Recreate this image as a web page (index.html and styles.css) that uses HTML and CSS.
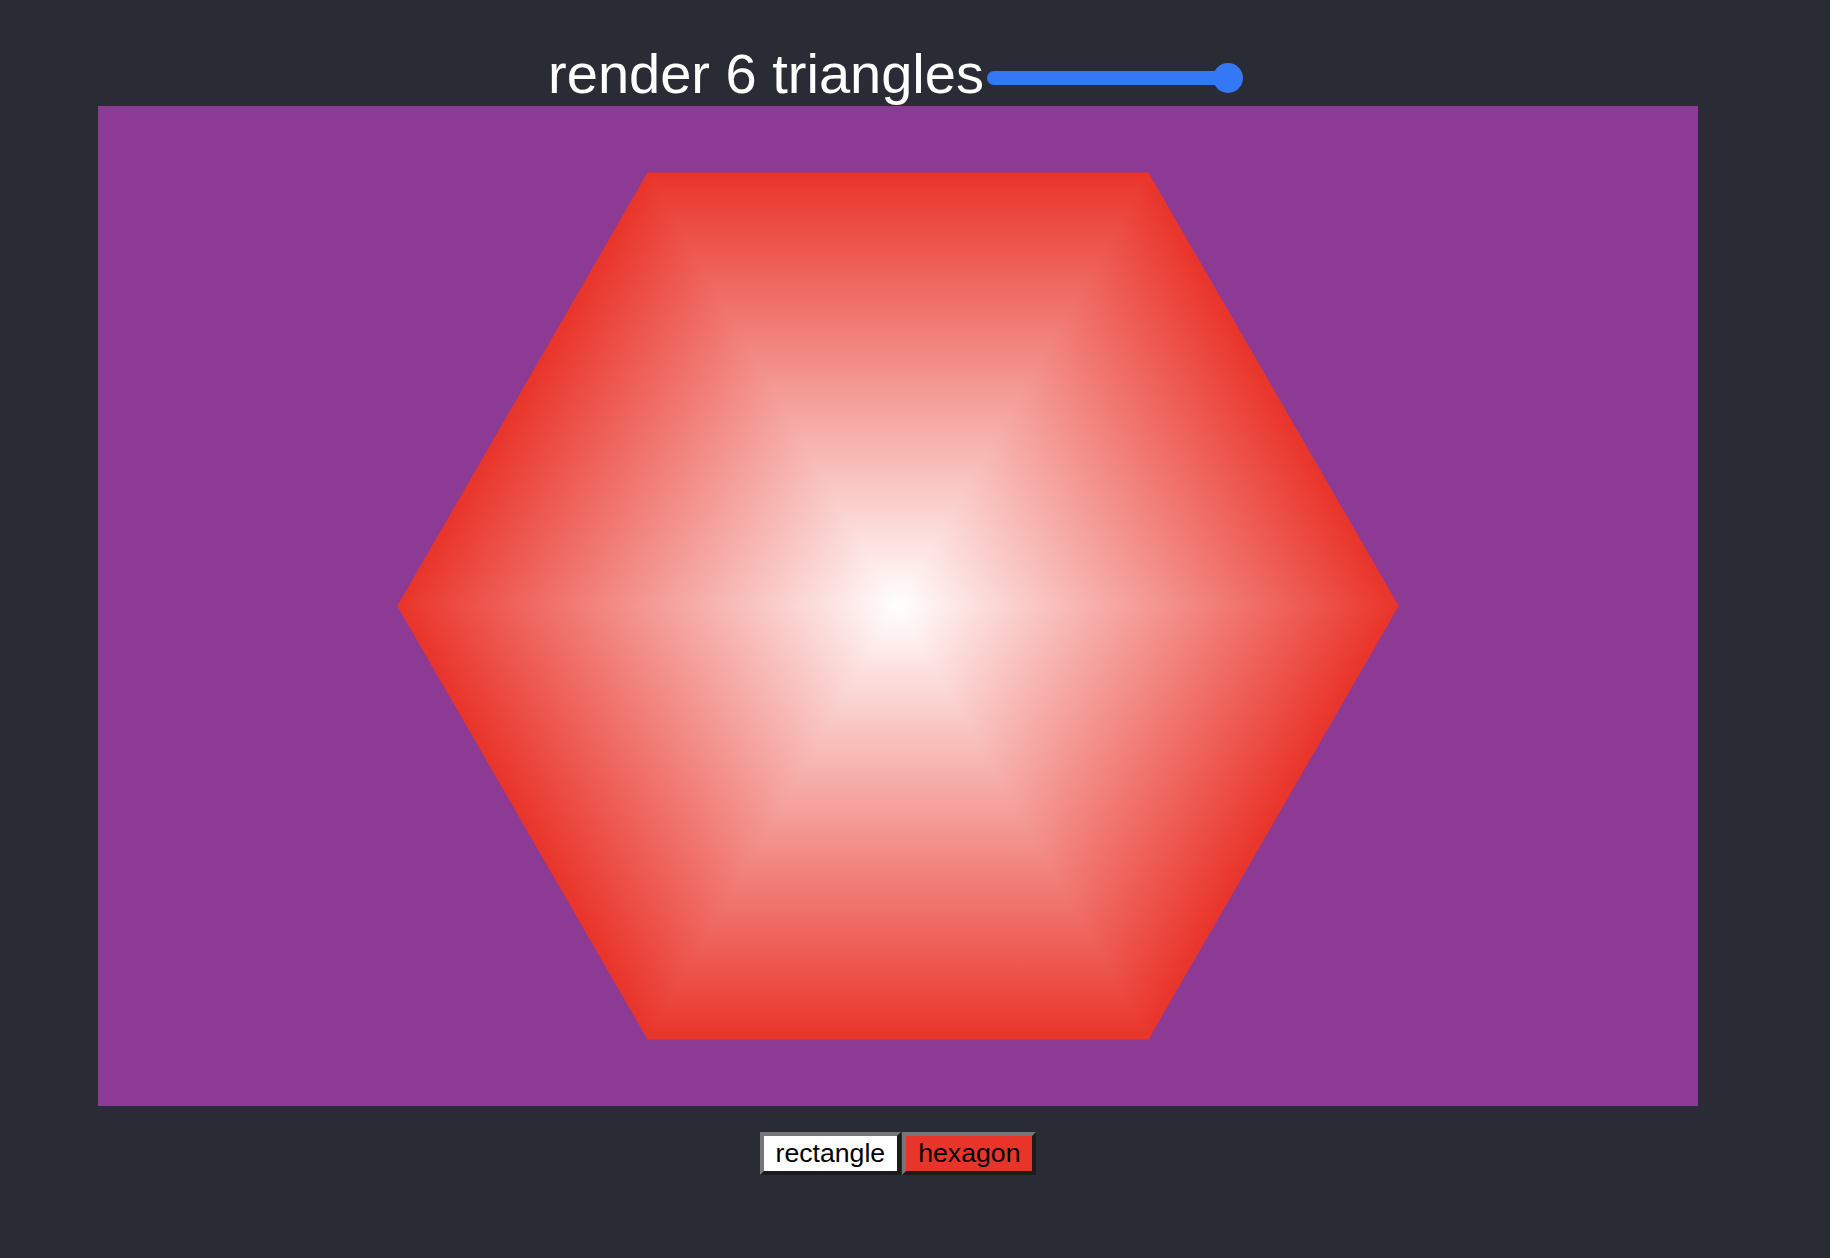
FILE: index.html
```html
<!DOCTYPE html>
<html lang="en">
<head>
<meta charset="utf-8">
<title>render 6 triangles</title>
<link rel="stylesheet" href="styles.css">
</head>
<body>
<div class="app">
  <header class="header">
    <h1 class="title">render 6 triangles</h1>
    <div class="slider" role="slider" aria-valuenow="6">
      <div class="track"></div>
      <div class="thumb"></div>
    </div>
  </header>
  <div class="canvas">
    <svg class="scene" width="1600" height="1000" viewBox="0 0 1600 1000" xmlns="http://www.w3.org/2000/svg">
      <defs>
        <linearGradient id="g0" gradientUnits="userSpaceOnUse" x1="800" y1="500" x2="1175" y2="283.494"><stop offset="0" stop-color="#ffffff"/><stop offset="1" stop-color="#e9342a"/></linearGradient>
        <linearGradient id="g1" gradientUnits="userSpaceOnUse" x1="800" y1="500" x2="800" y2="66.987"><stop offset="0" stop-color="#ffffff"/><stop offset="1" stop-color="#e9342a"/></linearGradient>
        <linearGradient id="g2" gradientUnits="userSpaceOnUse" x1="800" y1="500" x2="425" y2="283.494"><stop offset="0" stop-color="#ffffff"/><stop offset="1" stop-color="#e9342a"/></linearGradient>
        <linearGradient id="g3" gradientUnits="userSpaceOnUse" x1="800" y1="500" x2="425" y2="716.506"><stop offset="0" stop-color="#ffffff"/><stop offset="1" stop-color="#e9342a"/></linearGradient>
        <linearGradient id="g4" gradientUnits="userSpaceOnUse" x1="800" y1="500" x2="800" y2="933.013"><stop offset="0" stop-color="#ffffff"/><stop offset="1" stop-color="#e9342a"/></linearGradient>
        <linearGradient id="g5" gradientUnits="userSpaceOnUse" x1="800" y1="500" x2="1175" y2="716.506"><stop offset="0" stop-color="#ffffff"/><stop offset="1" stop-color="#e9342a"/></linearGradient>
      </defs>
      <polygon class="tri" points="800,500 1300,500 1050,66.987" fill="url(#g0)" stroke="url(#g0)"/>
      <polygon class="tri" points="800,500 1050,66.987 550,66.987" fill="url(#g1)" stroke="url(#g1)"/>
      <polygon class="tri" points="800,500 550,66.987 300,500" fill="url(#g2)" stroke="url(#g2)"/>
      <polygon class="tri" points="800,500 300,500 550,933.013" fill="url(#g3)" stroke="url(#g3)"/>
      <polygon class="tri" points="800,500 550,933.013 1050,933.013" fill="url(#g4)" stroke="url(#g4)"/>
      <polygon class="tri" points="800,500 1050,933.013 1300,500" fill="url(#g5)" stroke="url(#g5)"/>
    </svg>
  </div>
  <div class="buttons">
    <button class="btn btn-rect">rectangle</button>
    <button class="btn btn-hex">hexagon</button>
  </div>
</div>
</body>
</html>
```

FILE: styles.css
```css
html {
  background: #292c34;
}

body {
  margin: 0;
  padding: 42px 0 0 98px;
  background: #292c34;
  font-family: "Liberation Sans", Arial, sans-serif;
}

.app {
  width: 1600px;
  display: flex;
  flex-direction: column;
}

.header {
  display: flex;
  justify-content: center;
  align-items: center;
  gap: 3px;
  height: 64px;
  padding-right: 5px;
}

.title {
  margin: 0;
  font-family: "Liberation Sans", Arial, sans-serif;
  font-weight: 400;
  font-size: 56px;
  line-height: 64px;
  color: #ffffff;
}

.slider {
  width: 256px;
  height: 30px;
  margin-top: 8px;
  display: flex;
  align-items: center;
}

.track {
  flex: 1;
  height: 14px;
  border-radius: 7px;
  background: #3578f6;
}

.thumb {
  width: 30px;
  height: 30px;
  margin-left: -15px;
  border-radius: 50%;
  background: #3578f6;
  flex: none;
}

.canvas {
  width: 1600px;
  height: 1000px;
  background: #8c3a94;
}

.scene {
  display: block;
}

.tri {
  stroke-width: 1.2;
  stroke-linejoin: miter;
}

.buttons {
  display: flex;
  justify-content: center;
  gap: 1px;
  margin-top: 26px;
}

.btn {
  margin: 0;
  font-family: "Liberation Sans", Arial, sans-serif;
  font-size: 26.67px;
  line-height: 31px;
  padding: 2px 12px;
  border-width: 4px;
  border-style: solid;
  border-color: #777777 #1c1c1c #1c1c1c #777777;
  color: #000000;
  cursor: pointer;
}

.btn-rect {
  background: #ffffff;
}

.btn-hex {
  background: #e9342a;
}
```
